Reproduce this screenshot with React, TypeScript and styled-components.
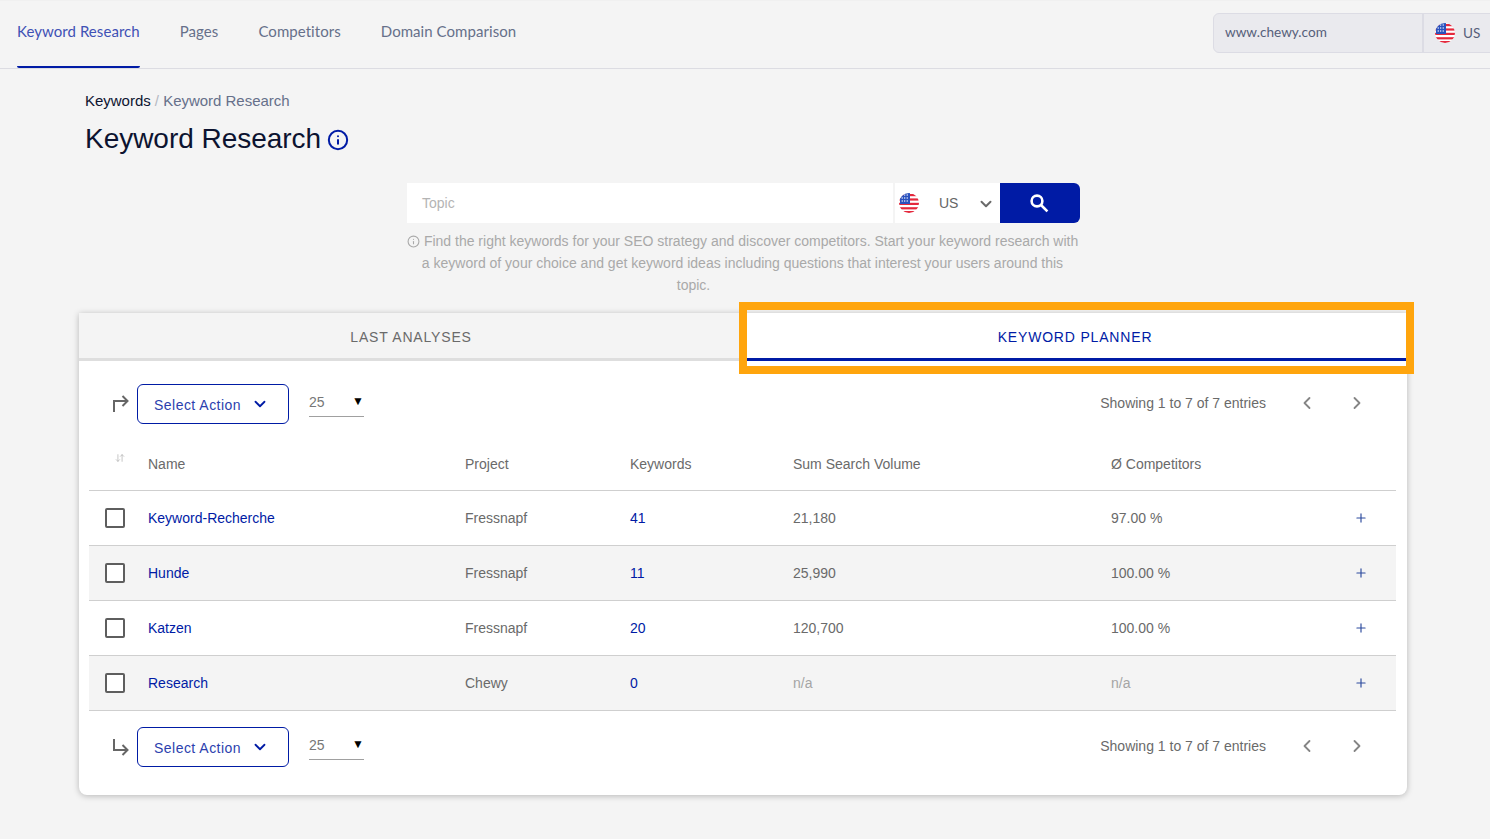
import { FC } from "react";
import styled, { createGlobalStyle } from "styled-components";
import {
    ArrowDownUp,
    ChevronDown,
    ChevronLeft,
    ChevronRight,
    Info,
    Plus,
} from "lucide-react";

const BLUE = "#001ba5";

const Global = createGlobalStyle`
    html, body {
        margin: 0;
        background: #f4f4f4;
        font-family: "Liberation Sans", Arial, sans-serif;
        color: #6a6a6a;
    }
    * {
        box-sizing: border-box;
    }
`;

const Page = styled.div`
    position: relative;
    width: 1490px;
    height: 839px;
    overflow: hidden;
    border-top: 1px solid #f0f0f0;
`;

const TopBar = styled.header`
    display: flex;
    justify-content: space-between;
    align-items: flex-start;
    height: 68px;
    padding-left: 17px;
    border-bottom: 1px solid #dcdce2;
`;

const Nav = styled.nav`
    display: flex;
    gap: 40px;
`;

const NavItem = styled.a<{ $active?: boolean }>`
    display: block;
    height: 67px;
    padding-top: 21px;
    font-family: Lato, sans-serif;
    font-size: 15px;
    line-height: 19px;
    letter-spacing: 0.06px;
    color: ${(p) => (p.$active ? "#3f51b5" : "#66708a")};
    border-bottom: 2px solid ${(p) => (p.$active ? BLUE : "transparent")};
    border-radius: 0 0 2px 2px;
`;

const DomainBox = styled.div`
    display: flex;
    width: 290px;
    height: 40px;
    margin-top: 12px;
    margin-right: -13px;
    background: #eaeaee;
    border: 1px solid #dcdce4;
    border-radius: 6px;
    font-family: Lato, sans-serif;
    font-size: 13.6px;
    color: #56607a;
`;

const DomainName = styled.div`
    display: flex;
    align-items: center;
    width: 210px;
    padding: 0 0 3px 11px;
    border-right: 2px solid #dcdce4;
`;

const DomainCountry = styled.div`
    display: flex;
    align-items: center;
    gap: 8px;
    padding-left: 11px;
`;

const Head = styled.div`
    padding: 22px 0 0 85px;
`;

const Crumbs = styled.div`
    font-size: 15px;
    line-height: 20px;
    letter-spacing: -0.02px;
    color: #66708a;
    b {
        font-weight: 400;
        color: #0c1330;
    }
    i {
        font-style: normal;
        color: #b5b8c2;
    }
`;

const Title = styled.h1`
    display: flex;
    align-items: center;
    gap: 6px;
    margin: 11px 0 0;
    font-size: 28px;
    line-height: 34px;
    font-weight: 400;
    letter-spacing: -0.03px;
    color: #0c1330;
    svg {
        margin-top: 1px;
        color: ${BLUE};
    }
`;

const SearchArea = styled.div`
    width: 673px;
    margin: 27px 0 0 407px;
`;

const SearchRow = styled.div`
    display: flex;
    height: 40px;
`;

const TopicInput = styled.div`
    display: flex;
    align-items: center;
    width: 486px;
    padding-left: 15px;
    background: #fff;
    font-size: 14px;
    color: #b4b4b4;
`;

const CountrySelect = styled.div`
    display: flex;
    align-items: center;
    width: 106px;
    margin-left: 1px;
    padding-left: 4px;
    background: #fff;
    border-left: 1px solid #f4f4f4;
    font-size: 14px;
    color: #666;
    span {
        margin-left: 20px;
        margin-right: 19px;
    }
    svg.flag {
        flex: none;
    }
    svg:last-child {
        color: #6a6a6a;
        margin-top: 2px;
    }
`;

const SearchButton = styled.button`
    display: flex;
    align-items: center;
    justify-content: center;
    width: 80px;
    padding: 0 2px 0 0;
    border: 0;
    background: ${BLUE};
    border-radius: 0 6px 6px 0;
    color: #fff;
`;

const Help = styled.p`
    margin: 7px 0 0;
    padding-right: 2px;
    font-size: 14px;
    line-height: 22px;
    color: #a9a9a9;
    text-align: center;
    white-space: nowrap;
    svg {
        vertical-align: -2px;
    }
`;

const HelpTail = styled.span`
    display: block;
    margin-right: 98px;
`;

const Card = styled.section`
    width: 1328px;
    height: 482px;
    margin: 17px 0 0 79px;
    padding-bottom: 28px;
    background: #fff;
    border-radius: 0 0 8px 8px;
    box-shadow: 0 1px 6px rgba(0, 0, 0, 0.25);
`;

const Tabs = styled.div`
    display: flex;
    height: 48px;
`;

const Tab = styled.div<{ $active?: boolean }>`
    flex: 1;
    display: flex;
    align-items: center;
    justify-content: center;
    padding-top: 3px;
    font-size: 14px;
    letter-spacing: 0.82px;
    color: ${(p) => (p.$active ? BLUE : "#6a6a6a")};
    background: ${(p) => (p.$active ? "#fff" : "#f4f4f4")};
    border-bottom: 3px solid ${(p) => (p.$active ? BLUE : "#dedede")};
`;

const Toolbar = styled.div<{ $top?: boolean }>`
    display: flex;
    align-items: center;
    height: 40px;
    margin-top: ${(p) => (p.$top ? "23px" : "16px")};
    padding: 0 40px 0 33px;
`;

const ArrowSlot = styled.div<{ $top?: boolean }>`
    display: flex;
    width: 25px;
    margin-top: ${(p) => (p.$top ? "-2px" : "2px")};
    color: #666;
`;

const ActionButton = styled.button`
    display: flex;
    align-items: center;
    width: 152px;
    height: 40px;
    padding: 2px 0 0 16px;
    background: #fff;
    border: 1px solid ${BLUE};
    border-radius: 6px;
    font-family: "Liberation Sans", Arial, sans-serif;
    font-size: 14px;
    letter-spacing: 0.47px;
    color: #2c3fae;
    svg {
        margin: -2px 0 0 10px;
        color: ${BLUE};
    }
`;

const PageSize = styled.div`
    display: flex;
    justify-content: space-between;
    width: 55px;
    height: 30px;
    margin: -4px 0 0 20px;
    padding: 7px 0 0;
    border-bottom: 1px solid #a0a0a0;
    font-size: 14px;
    line-height: 16px;
    color: #777;
    span:last-child {
        font-size: 12px;
        color: #000;
        margin-top: -1px;
    }
`;

const Entries = styled.div`
    margin: -2px 0 0 auto;
    font-size: 14px;
    color: #6a6a6a;
`;

const Pager = styled.div`
    display: flex;
    gap: 30px;
    margin: -2px 0 0 31px;
    color: #858585;
`;

const Table = styled.table`
    width: 1307px;
    margin: 16px 0 0 10px;
    border-collapse: collapse;
    table-layout: fixed;
    font-size: 14px;
`;

const Th = styled.th<{ $w?: number }>`
    width: ${(p) => (p.$w ? `${p.$w}px` : "auto")};
    height: 50px;
    padding: 0 0 2px;
    font-weight: 400;
    text-align: left;
    color: #6a6a6a;
    border-bottom: 1px solid #cfcfcf;
    svg {
        margin: 0 0 8px 26px;
        color: #bbb;
    }
`;

const Row = styled.tr<{ $shade: boolean }>`
    background: ${(p) => (p.$shade ? "#f4f4f4" : "#fff")};
`;

const Td = styled.td<{ $muted?: boolean }>`
    height: 55px;
    padding: 0;
    color: ${(p) => (p.$muted ? "#a5a5a5" : "#6a6a6a")};
    border-bottom: 1px solid #cfcfcf;
`;

const Check = styled.span`
    display: block;
    width: 20px;
    height: 20px;
    margin-left: 16px;
    border: 2px solid #5e5e5e;
    border-radius: 2px;
    background: #fff;
`;

const Link = styled.a`
    color: ${BLUE};
`;

const Expand = styled.span`
    display: flex;
    justify-content: flex-end;
    padding-right: 28px;
    color: #2c4a9e;
`;

// the orange frame sits on top of the screenshot, marking the tab
const Highlight = styled.div`
    position: absolute;
    left: 739px;
    top: 301px;
    width: 675px;
    height: 72px;
    border: 8px solid #ffa50d;
    pointer-events: none;
`;

const Flag: FC<{ size?: number }> = ({ size = 20 }) => (
    <svg className="flag" width={size} height={size} viewBox="0 0 20 20">
        <defs>
            <clipPath id="flag-circle">
                <circle cx="10" cy="10" r="10" />
            </clipPath>
        </defs>
        <g clipPath="url(#flag-circle)">
            <rect width="20" height="20" fill="#fff" />
            {[1, 5.4, 9.8, 14.2, 18].map((y) => (
                <rect key={y} x="0" y={y} width="20" height="2.2" fill="#e4283c" />
            ))}
            <rect x="1" width="10" height="11" fill="#2a52be" />
            {[2.5, 5, 7.5].map((x) =>
                [2, 5, 8].map((y) => (
                    <circle key={`${x}-${y}`} cx={x + 0.7} cy={y} r="0.7" fill="#fff" />
                )),
            )}
        </g>
    </svg>
);

const SearchGlass = () => (
    <svg width="20" height="20" viewBox="0 0 20 20" fill="none" stroke="currentColor" strokeWidth="2.6">
        <circle cx="8" cy="8" r="5.4" />
        <path d="M12 12l6.4 6.4" />
    </svg>
);

const ElbowUp = () => (
    <svg width="17" height="17" viewBox="0 0 17 17" fill="none" stroke="currentColor" strokeWidth="2">
        <path d="M2 17V6h13" />
        <path d="M10.5 1l5 5-5 5" />
    </svg>
);

const ElbowDown = () => (
    <svg width="17" height="17" viewBox="0 0 17 17" fill="none" stroke="currentColor" strokeWidth="2">
        <path d="M2 0v11h13" />
        <path d="M10.5 6l5 5-5 5" />
    </svg>
);

const rows = [
    { name: "Keyword-Recherche", project: "Fressnapf", keywords: "41", volume: "21,180", comp: "97.00 %" },
    { name: "Hunde", project: "Fressnapf", keywords: "11", volume: "25,990", comp: "100.00 %" },
    { name: "Katzen", project: "Fressnapf", keywords: "20", volume: "120,700", comp: "100.00 %" },
    { name: "Research", project: "Chewy", keywords: "0", volume: "n/a", comp: "n/a" },
];

const TableTools: FC<{ top?: boolean }> = ({ top }) => (
    <Toolbar $top={top}>
        <ArrowSlot $top={top}>{top ? <ElbowUp /> : <ElbowDown />}</ArrowSlot>
        <ActionButton>
            Select Action
            <ChevronDown size={18} strokeWidth={2.4} />
        </ActionButton>
        <PageSize>
            <span>25</span>
            <span>▼</span>
        </PageSize>
        <Entries>Showing 1 to 7 of 7 entries</Entries>
        <Pager>
            <ChevronLeft size={20} strokeWidth={2.2} />
            <ChevronRight size={20} strokeWidth={2.2} />
        </Pager>
    </Toolbar>
);

export default function App() {
    return (
        <Page>
            <Global />
            <TopBar>
                <Nav>
                    <NavItem $active>Keyword Research</NavItem>
                    <NavItem>Pages</NavItem>
                    <NavItem>Competitors</NavItem>
                    <NavItem>Domain Comparison</NavItem>
                </Nav>
                <DomainBox>
                    <DomainName>www.chewy.com</DomainName>
                    <DomainCountry>
                        <Flag />
                        US
                    </DomainCountry>
                </DomainBox>
            </TopBar>
            <Head>
                <Crumbs>
                    <b>Keywords</b> <i>/</i> Keyword Research
                </Crumbs>
                <Title>
                    Keyword Research
                    <Info size={22} strokeWidth={2.2} />
                </Title>
            </Head>
            <SearchArea>
                <SearchRow>
                    <TopicInput>Topic</TopicInput>
                    <CountrySelect>
                        <Flag />
                        <span>US</span>
                        <ChevronDown size={18} strokeWidth={2.6} />
                    </CountrySelect>
                    <SearchButton>
                        <SearchGlass />
                    </SearchButton>
                </SearchRow>
                <Help>
                    <Info size={13} /> Find the right keywords for your SEO strategy and discover competitors. Start your keyword research with
                    <br />
                    a keyword of your choice and get keyword ideas including questions that interest your users around this
                    <HelpTail>topic.</HelpTail>
                </Help>
            </SearchArea>
            <Card>
                <Tabs>
                    <Tab>LAST ANALYSES</Tab>
                    <Tab $active>KEYWORD PLANNER</Tab>
                </Tabs>
                <TableTools top />
                <Table>
                    <thead>
                        <tr>
                            <Th $w={59}>
                                <ArrowDownUp size={10} />
                            </Th>
                            <Th $w={317}>Name</Th>
                            <Th $w={165}>Project</Th>
                            <Th $w={163}>Keywords</Th>
                            <Th $w={318}>Sum Search Volume</Th>
                            <Th $w={200}>Ø Competitors</Th>
                            <Th />
                        </tr>
                    </thead>
                    <tbody>
                        {rows.map((r, i) => (
                            <Row key={r.name} $shade={i % 2 === 1}>
                                <Td>
                                    <Check />
                                </Td>
                                <Td>
                                    <Link>{r.name}</Link>
                                </Td>
                                <Td>{r.project}</Td>
                                <Td>
                                    <Link>{r.keywords}</Link>
                                </Td>
                                <Td $muted={r.volume === "n/a"}>{r.volume}</Td>
                                <Td $muted={r.comp === "n/a"}>{r.comp}</Td>
                                <Td>
                                    <Expand>
                                        <Plus size={14} strokeWidth={2} />
                                    </Expand>
                                </Td>
                            </Row>
                        ))}
                    </tbody>
                </Table>
                <TableTools />
            </Card>
            <Highlight />
        </Page>
    );
}
